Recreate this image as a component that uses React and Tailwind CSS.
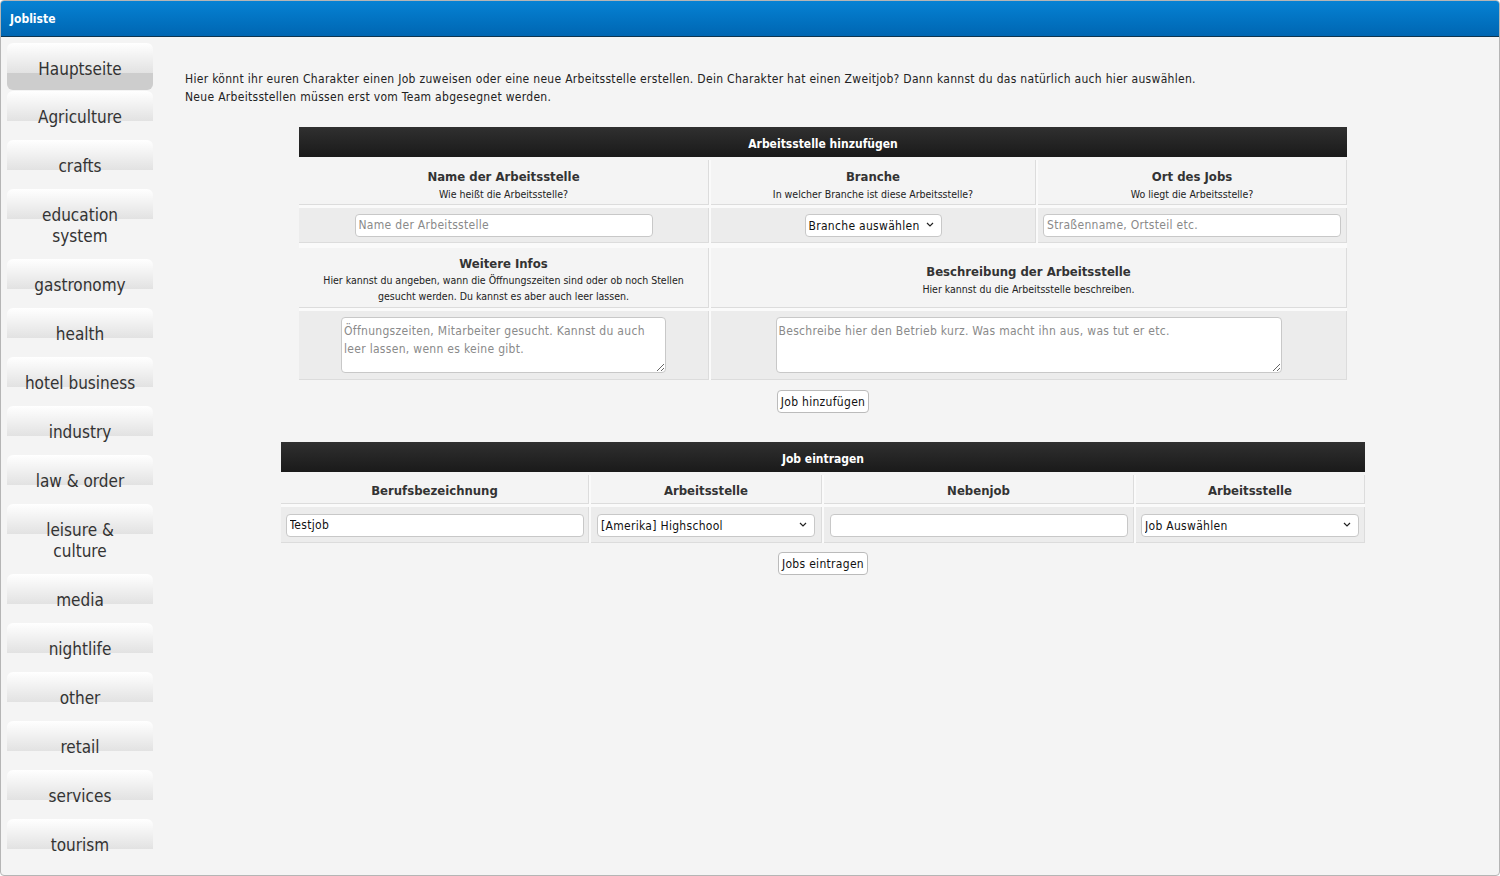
import { useState } from "react";

const navItems = [
  ["Hauptseite"],
  ["Agriculture"],
  ["crafts"],
  ["education", "system"],
  ["gastronomy"],
  ["health"],
  ["hotel business"],
  ["industry"],
  ["law & order"],
  ["leisure &", "culture"],
  ["media"],
  ["nightlife"],
  ["other"],
  ["retail"],
  ["services"],
  ["tourism"],
];

function Chevron() {
  return (
    <svg width="8" height="5" viewBox="0 0 8 5" className="pointer-events-none absolute right-[8px] top-[9px]">
      <path d="M1 1l3 3 3-3" fill="none" stroke="#222" strokeWidth="1.2" />
    </svg>
  );
}

function Select({ value, width }) {
  return (
    <div className={`relative ${width}`}>
      <select
        defaultValue={value}
        className="h-[23px] w-full appearance-none rounded-[4px] border border-[#c8c8c8] bg-white pl-[3px] pr-[20px] text-[12px] tracking-[0.3px] text-[#111] outline-none"
      >
        <option>{value}</option>
      </select>
      <Chevron />
    </div>
  );
}

function Cell({ title, sub, className = "", subLeading = "leading-[17px]" }) {
  return (
    <div className={`flex flex-col items-center justify-center border-r border-b border-[#dcdcdc] bg-[#f4f4f4] text-center ${className}`}>
      <div className="text-[13px] font-bold leading-[18px] text-[#333]">{title}</div>
      {sub && <div className={`text-[10.5px] ${subLeading} text-[#222]`}>{sub}</div>}
    </div>
  );
}

function InputCell({ children, className = "" }) {
  return (
    <div className={`flex items-center justify-center border-r border-b border-[#dcdcdc] bg-[#ececec] ${className}`}>
      {children}
    </div>
  );
}

const inputCls =
  "h-[23px] rounded-[4px] border border-[#c8c8c8] bg-white px-[3px] text-[12px] tracking-[0.3px] text-[#111] outline-none placeholder:text-[#8a8a8a]";

const areaCls =
  "h-[56px] rounded-[4px] border border-[#c8c8c8] bg-white px-[2px] pt-[4px] text-[12px] leading-[18px] tracking-[0.3px] outline-none placeholder:text-[#8a8a8a]";

const btnCls =
  "h-[23px] rounded-[4px] border border-[#bbb] bg-white px-[3px] text-[12px] tracking-[0.3px] text-[#111]";

export default function App() {
  const [active] = useState(0);

  return (
    <div className="h-[876px] w-[1500px] overflow-hidden rounded-[4px] border border-[#b5b5b5] bg-[#f4f4f4] font-['DejaVu_Sans_Condensed','DejaVu_Sans',sans-serif] [font-stretch:condensed]">
      <div className="flex h-[36px] items-center border-b border-[#0d3550] bg-gradient-to-b from-[#0682d4] to-[#0066b2] px-[9px] pt-[1px] text-[12px] font-bold text-white">
        Jobliste
      </div>

      <div className="flex">
        {/* Seitenleiste */}
        <div className="ml-[6px] mt-[6px] w-[146px] shrink-0">
          {navItems.map((lines, i) => (
            <div
              key={i}
              className={`rounded-[6px] bg-[linear-gradient(#ffffff,#e2e2e2)] bg-[length:100%_30px] bg-no-repeat pt-[16px] text-center text-[17px] leading-[21px] text-[#333] ${
                i === active ? "bg-[#cdcdcd] mb-[1px] pb-[10px]" : "pb-[12px]"
              }`}
            >
              {lines.map((l, j) => (
                <div key={j}>{l}</div>
              ))}
            </div>
          ))}
        </div>

        {/* Inhalt */}
        <div className="flex-1 pl-[32px] pr-[38px] pt-[33px]">
          <p className="text-[12px] leading-[18px] tracking-[0.3px] text-[#222]">
            Hier könnt ihr euren Charakter einen Job zuweisen oder eine neue Arbeitsstelle erstellen. Dein Charakter hat einen Zweitjob? Dann kannst du das natürlich auch hier auswählen.
            <br />
            Neue Arbeitsstellen müssen erst vom Team abgesegnet werden.
          </p>

          {/* Arbeitsstelle hinzufügen */}
          <div className="mx-auto mt-[21px] w-[1048px]">
            <div className="flex h-[30px] items-center justify-center bg-gradient-to-b from-[#303030] to-[#1a1a1a] pt-[3px] text-[12px] font-bold text-white">
              Arbeitsstelle hinzufügen
            </div>
            <div className="mt-[3px] grid grid-cols-[410px_325px_309px] gap-x-[2px] gap-y-[3px] bg-[#fafafa]">
              <Cell className="h-[45px] pt-[6px]" title="Name der Arbeitsstelle" sub="Wie heißt die Arbeitsstelle?" />
              <Cell className="h-[45px] pt-[6px]" title="Branche" sub="In welcher Branche ist diese Arbeitsstelle?" />
              <Cell className="h-[45px] pt-[6px]" title="Ort des Jobs" sub="Wo liegt die Arbeitsstelle?" />

              <InputCell className="h-[35px] mb-[2px]">
                <input className={`${inputCls} w-[298px]`} placeholder="Name der Arbeitsstelle" />
              </InputCell>
              <InputCell className="h-[35px] mb-[2px]">
                <Select value="Branche auswählen" width="w-[137px]" />
              </InputCell>
              <InputCell className="h-[35px] mb-[2px]">
                <input className={`${inputCls} w-[298px]`} placeholder="Straßenname, Ortsteil etc." />
              </InputCell>

              <div className="flex h-[60px] flex-col items-center justify-center border-r border-b border-[#dcdcdc] bg-[#f4f4f4] px-[10px] pt-[4px] text-center">
                <div className="text-[13px] font-bold leading-[17px] text-[#333]">Weitere Infos</div>
                <div className="text-[10.5px] leading-[16px] text-[#222]">
                  Hier kannst du angeben, wann die Öffnungszeiten sind oder ob noch Stellen gesucht werden. Du kannst es aber auch leer lassen.
                </div>
              </div>
              <Cell
                className="col-span-2 h-[60px] pt-[5px]"
                subLeading="leading-[16px]"
                title="Beschreibung der Arbeitsstelle"
                sub="Hier kannst du die Arbeitsstelle beschreiben."
              />

              <InputCell className="h-[69px]">
                <textarea
                  className={`${areaCls} w-[325px]`}
                  placeholder="Öffnungszeiten, Mitarbeiter gesucht. Kannst du auch leer lassen, wenn es keine gibt."
                />
              </InputCell>
              <InputCell className="col-span-2 h-[69px]">
                <textarea
                  className={`${areaCls} w-[506px]`}
                  placeholder="Beschreibe hier den Betrieb kurz. Was macht ihn aus, was tut er etc."
                />
              </InputCell>
            </div>
            <div className="mt-[10px] flex justify-center">
              <button className={btnCls}>Job hinzufügen</button>
            </div>
          </div>

          {/* Job eintragen */}
          <div className="mx-auto mt-[29px] w-[1084px]">
            <div className="flex h-[30px] items-center justify-center bg-gradient-to-b from-[#303030] to-[#1a1a1a] pt-[3px] text-[12px] font-bold text-white">
              Job eintragen
            </div>
            <div className="mt-[3px] grid grid-cols-[308px_231px_310px_229px] gap-x-[2px] gap-y-[3px] bg-[#fafafa]">
              <Cell className="h-[29px] pt-[4px]" title="Berufsbezeichnung" />
              <Cell className="h-[29px] pt-[4px]" title="Arbeitsstelle" />
              <Cell className="h-[29px] pt-[4px]" title="Nebenjob" />
              <Cell className="h-[29px] pt-[4px]" title="Arbeitsstelle" />

              <InputCell className="h-[36px] pt-[1px]">
                <input className={`${inputCls} w-[298px]`} defaultValue="Testjob" />
              </InputCell>
              <InputCell className="h-[36px] pt-[1px]">
                <Select value="[Amerika] Highschool" width="w-[218px]" />
              </InputCell>
              <InputCell className="h-[36px] pt-[1px]">
                <input className={`${inputCls} w-[298px]`} />
              </InputCell>
              <InputCell className="h-[36px] pt-[1px]">
                <Select value="Job Auswählen" width="w-[218px]" />
              </InputCell>
            </div>
            <div className="mt-[9px] flex justify-center">
              <button className={btnCls}>Jobs eintragen</button>
            </div>
          </div>
        </div>
      </div>
    </div>
  );
}
